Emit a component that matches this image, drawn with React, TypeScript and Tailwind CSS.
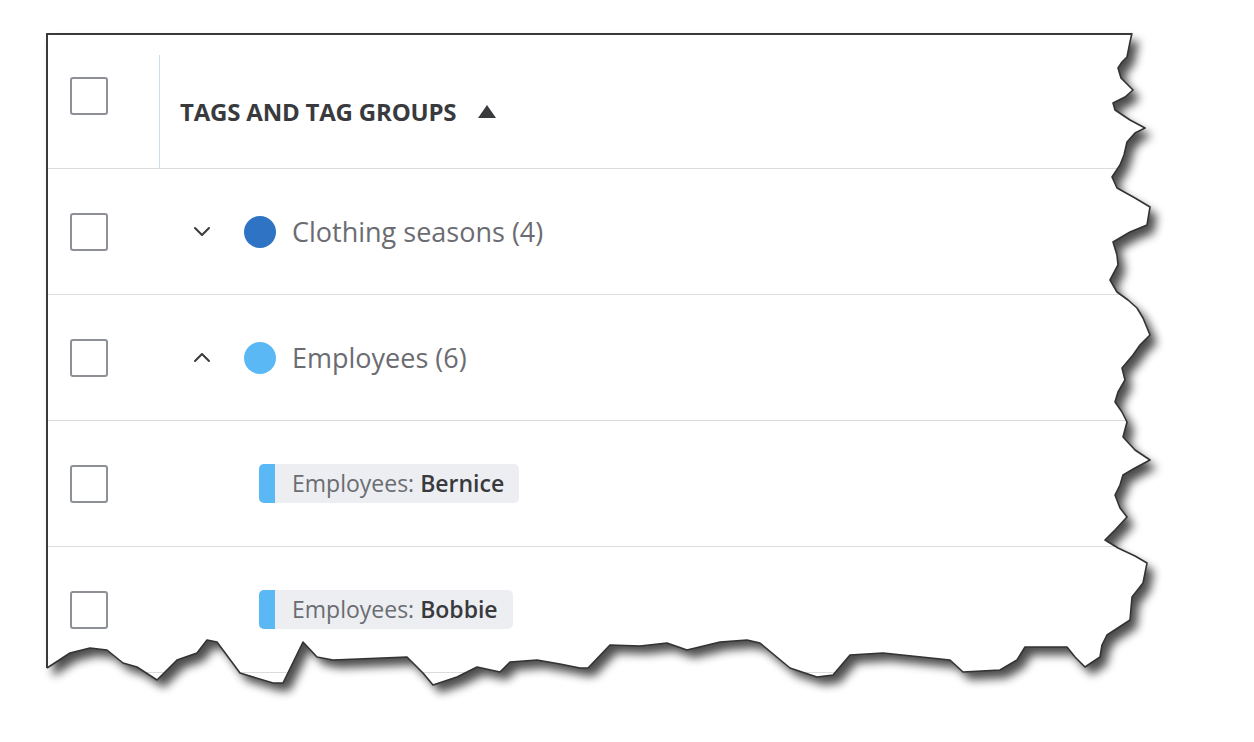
import React from "react";

const FONT = { fontFamily: '"Open Sans", "Noto Sans", sans-serif' };

// torn paper outline: right edge top to bottom, then bottom edge right to left
const TEAR: [number, number][] = [
  [1132, 33], [1130, 42], [1127, 57], [1122, 62], [1118, 68], [1121, 78], [1133, 90], [1125, 97],
  [1113, 103], [1115, 110], [1130, 120], [1145, 128], [1135, 133], [1127, 142], [1124, 155],
  [1120, 165], [1112, 177], [1117, 188], [1135, 198], [1150, 207], [1147, 225], [1130, 232],
  [1113, 242], [1117, 255], [1118, 265], [1110, 280], [1117, 292], [1128, 300], [1137, 308],
  [1143, 318], [1150, 335], [1140, 345], [1133, 355], [1122, 368], [1125, 380], [1118, 392],
  [1115, 402], [1122, 412], [1127, 422], [1123, 437], [1135, 450], [1150, 460], [1135, 468],
  [1123, 475], [1120, 485], [1115, 495], [1120, 508], [1127, 517], [1115, 530], [1105, 540],
  [1118, 548], [1135, 556], [1147, 563], [1143, 583], [1132, 597], [1130, 620], [1107, 635],
  [1102, 645], [1100, 657], [1085, 667], [1075, 657], [1067, 647], [1025, 647], [1017, 660],
  [1000, 670], [963, 672], [950, 660], [883, 653], [850, 655], [833, 675], [817, 677], [790, 668],
  [760, 643], [747, 640], [720, 642], [687, 650], [667, 643], [640, 646], [610, 645], [588, 668],
  [580, 668], [560, 664], [537, 660], [510, 662], [500, 672], [477, 667], [457, 677], [433, 685],
  [423, 673], [407, 657], [333, 660], [317, 657], [303, 642], [283, 683], [273, 683], [240, 673],
  [217, 642], [207, 640], [197, 653], [177, 660], [157, 680], [137, 667], [123, 663], [107, 650],
  [90, 648], [70, 653], [47, 668],
];

const tearLine = TEAR.map(([x, y]) => `${x},${y}`).join(" ");
const paperPath = `M46 33 L${TEAR.map(([x, y]) => `${x} ${y}`).join(" L")} L46 668 Z`;
const outsidePath = `M0 0H1254V742H0Z ${paperPath}`;

function Checkbox() {
  return <div className="h-[38px] w-[38px] rounded-[3px] border-2 border-[#8d9096] bg-white" />;
}

function Chevron({ up }: { up?: boolean }) {
  return (
    <svg width="18" height="11" viewBox="0 0 18 11" className="text-[#393a3d]">
      <polyline
        points={up ? "2,9 9,2 16,9" : "2,2 9,9 16,2"}
        fill="none"
        stroke="currentColor"
        strokeWidth="2"
        strokeLinecap="round"
        strokeLinejoin="round"
      />
    </svg>
  );
}

function GroupRow({ label, color, open }: { label: string; color: string; open?: boolean }) {
  return (
    <div className="flex h-[126px] items-center border-b border-[#dcdcdc]">
      <div className="w-[145px] shrink-0 pl-[22px]">
        <Checkbox />
      </div>
      <Chevron up={open} />
      <div className="ml-[33px] h-[32px] w-[32px] shrink-0 rounded-full" style={{ backgroundColor: color }} />
      <span className="ml-[16px] text-[27px] leading-none text-[#6b6c72]">{label}</span>
    </div>
  );
}

function TagRow({ name }: { name: string }) {
  return (
    <div className="flex h-[126px] items-center border-b border-[#dcdcdc]">
      <div className="w-[211px] shrink-0 pl-[22px]">
        <Checkbox />
      </div>
      <div className="flex h-[39px] items-center overflow-hidden rounded-[5px] bg-[#eceef1]">
        <div className="h-full w-[16px] bg-[#5ab8f5]" />
        <span className="pl-[17px] pr-[15px] text-[23px] leading-none text-[#6b6c72]">
          Employees: <span className="font-semibold text-[#393a3d]">{name}</span>
        </span>
      </div>
    </div>
  );
}

export default function App() {
  return (
    <div className="relative h-[742px] w-[1254px] overflow-hidden bg-white" style={FONT}>
      <div className="pl-[46px] pt-[33px]">
        <div className="h-[660px] w-[1110px] overflow-hidden border-l-2 border-t-2 border-[#3a3a3a]">
          <div className="flex h-[134px] border-b border-[#dcdcdc]">
            <div className="w-[111px] shrink-0 pl-[22px] pt-[42px]">
              <Checkbox />
            </div>
            <div className="mt-[20px] flex flex-1 items-center border-l border-[#ccdcef] pl-[20px]">
              <span className="text-[24px] font-bold leading-none tracking-[-0.2px] text-[#393a3d]">
                TAGS AND TAG GROUPS
              </span>
              <svg width="18" height="13" viewBox="0 0 18 13" className="ml-[22px]">
                <polygon points="9,0 18,13 0,13" fill="#393a3d" />
              </svg>
            </div>
          </div>
          <GroupRow label="Clothing seasons (4)" color="#2f73c4" />
          <GroupRow label="Employees (6)" color="#5ab8f5" open />
          <TagRow name="Bernice" />
          <TagRow name="Bobbie" />
        </div>
      </div>

      {/* torn edge */}
      <svg className="pointer-events-none absolute inset-0" width="1254" height="742" viewBox="0 0 1254 742">
        <defs>
          <clipPath id="outside">
            <path d={outsidePath} clipRule="evenodd" />
          </clipPath>
          <filter id="blur" x="-10%" y="-10%" width="120%" height="120%">
            <feGaussianBlur stdDeviation="5" />
          </filter>
        </defs>
        <path d={outsidePath} fill="#fff" fillRule="evenodd" />
        <g clipPath="url(#outside)">
          <path d={paperPath} fill="#000" opacity="0.7" filter="url(#blur)" transform="translate(7 8)" />
        </g>
        <polyline points={tearLine} fill="none" stroke="#333" strokeWidth="1.6" strokeLinejoin="round" />
      </svg>
    </div>
  );
}
